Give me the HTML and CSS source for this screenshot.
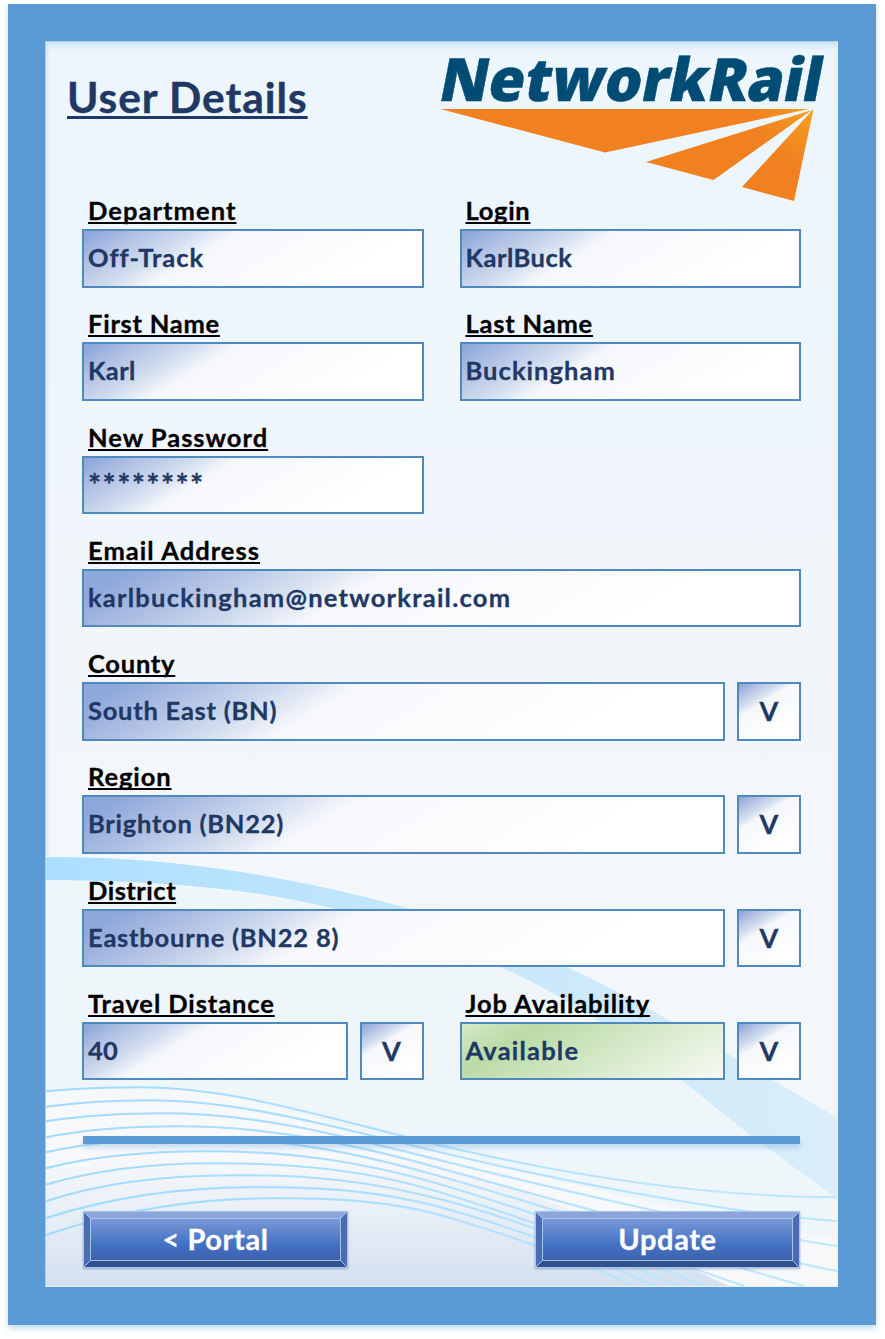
FILE: index.html
```html
<!DOCTYPE html>
<html lang="en">
<head>
<meta charset="utf-8">
<title>User Details</title>
<link rel="stylesheet" href="styles.css">
</head>
<body>
<main class="frame">
  <div class="panel">
    <svg class="waves" viewBox="45 41 793 1246" preserveAspectRatio="none" aria-hidden="true">
      <defs>
        <linearGradient id="band" x1="0" x2="1"><stop offset="0" stop-color="#abdfff"/><stop offset=".5" stop-color="#c6e7fb"/><stop offset="1" stop-color="#daeefa"/></linearGradient>
        <linearGradient id="haze" x1="0" y1="0" x2="0" y2="1"><stop offset="0" stop-color="#f5f8fa"/><stop offset=".33" stop-color="#f8f9fb"/><stop offset=".6" stop-color="#eaf0f7"/><stop offset="1" stop-color="#d4e0f0"/></linearGradient>
        <linearGradient id="wire" gradientUnits="userSpaceOnUse" x1="45" x2="838"><stop offset="0" stop-color="#a0daff"/><stop offset="1" stop-color="#c0e8fc"/></linearGradient>
      </defs>
      <path fill="#eef6fa" d="M45 881C160 881 250 890 327 908C400 927 450 945 498 967C570 1000 630 1042 680 1080L838 1200V1287H45Z"/>
      <path fill="#f7f8f9" d="M45 1092C90 1087 190 1080 250 1102C400 1140 560 1190 838 1240V1287H45Z"/>
      <path fill="url(#haze)" d="M45 1092C90 1087 190 1080 250 1110C370 1148 480 1170 590 1220Q670 1260 730 1287H45Z"/>
      <path fill="url(#band)" stroke="#f8fafb" stroke-width="1" d="M40 857C160 855 290 875 407 908C470 927 510 942 567 967C660 1010 750 1068 843 1120V1204L750 1136L680 1080C620 1034 560 994 498 967C450 945 400 927 327 908C250 890 160 881 40 881Z"/>
      <g fill="none" stroke="url(#wire)" stroke-width="2.1">
        <path d="M45 1092C77 1089 105 1088 140 1088C235 1088 330 1120 440 1146S690 1198 838 1198"/>
        <path d="M45 1107.500C80 1103 115 1101 150 1101C240 1101 340 1129 440 1153S710 1212 838 1222"/>
        <path d="M45 1122C85 1116 125 1114 165 1114C255 1114 340 1136 440 1161S740 1233 838 1247"/>
        <path d="M45 1138C85 1130 130 1127 178 1127C268 1127 350 1144 440 1169S750 1256 838 1272"/>
        <path d="M45 1153C90 1143 140 1139 190 1139C285 1139 350 1152 440 1177S690 1255 805 1287"/>
        <path d="M45 1169C95 1156 150 1152 205 1152C290 1152 360 1162 440 1185S660 1258 745 1287"/>
        <path d="M45 1185.500C100 1169 155 1164 215 1164C300 1164 370 1172 440 1193S630 1257 705 1287"/>
        <path d="M45 1202C105 1182 170 1176 235 1176C315 1176 370 1182 440 1200S600 1252 677 1287"/>
        <path d="M45 1219C110 1198 180 1188 255 1188C325 1188 380 1192 440 1208S595 1258 655 1287"/>
        <path d="M45 1236C115 1211 200 1199 275 1199C335 1199 390 1202 440 1216S580 1260 634 1287"/>
      </g>
    </svg>

    <header class="header">
      <h1 class="title">User Details</h1>
      <svg class="logo" viewBox="436 21 394 184" role="img" aria-label="NetworkRail">
        <defs><radialGradient id="flare" gradientUnits="userSpaceOnUse" cx="813" cy="109" r="60"><stop offset="0" stop-color="#f6a01f"/><stop offset="1" stop-color="#f08020"/></radialGradient></defs>
        <text class="logo-text" transform="translate(437 101) skewX(-11)" textLength="382" lengthAdjust="spacingAndGlyphs">NetworkRail</text>
        <path fill="url(#flare)" d="M440.500 109H809L605 152.500ZM812 110L646 162L713.500 180ZM813.500 109L742 187L794 201Z"/>
      </svg>
    </header>

    <form class="form">
      <div class="row halves">
        <label class="field"><span class="label l-dept">Department</span><span class="box v-dept">Off-Track</span></label>
        <label class="field"><span class="label l-login">Login</span><span class="box v-login">KarlBuck</span></label>
      </div>
      <div class="row halves">
        <label class="field"><span class="label l-first">First Name</span><span class="box v-first">Karl</span></label>
        <label class="field"><span class="label l-last">Last Name</span><span class="box v-last">Buckingham</span></label>
      </div>
      <div class="row halves">
        <label class="field"><span class="label l-pass">New Password</span><span class="box v-pass">********</span></label>
      </div>
      <div class="row">
        <label class="field"><span class="label l-mail">Email Address</span><span class="box long v-mail">karlbuckingham@networkrail.com</span></label>
      </div>
      <div class="row">
        <div class="field"><span class="label l-county">County</span><div class="select"><span class="box long v-county">South East (BN)</span><span class="box drop">V</span></div></div>
      </div>
      <div class="row">
        <div class="field"><span class="label l-region">Region</span><div class="select"><span class="box long v-region">Brighton (BN22)</span><span class="box drop">V</span></div></div>
      </div>
      <div class="row">
        <div class="field"><span class="label l-district">District</span><div class="select"><span class="box long v-district">Eastbourne (BN22 8)</span><span class="box drop">V</span></div></div>
      </div>
      <div class="row halves">
        <div class="field"><span class="label l-travel">Travel Distance</span><div class="select"><span class="box v-travel">40</span><span class="box drop">V</span></div></div>
        <div class="field"><span class="label l-job">Job Availability</span><div class="select"><span class="box available v-job">Available</span><span class="box drop">V</span></div></div>
      </div>
      <div class="divider"></div>
      <div class="actions">
        <button type="button" class="button"><svg class="bevel" viewBox="0 0 265 57" aria-hidden="true"><path d="M.5.500H264.500V56.500H.5ZM7.500 7.500H257.500V49.500H7.500ZM.5.500L7.500 7.500M264.500.500L257.500 7.500M.5 56.500L7.500 49.500M264.500 56.500L257.500 49.500"/></svg><span class="caption c-portal">&lt; Portal</span></button>
        <button type="button" class="button"><svg class="bevel" viewBox="0 0 265 57" aria-hidden="true"><path d="M.5.500H264.500V56.500H.5ZM7.500 7.500H257.500V49.500H7.500ZM.5.500L7.500 7.500M264.500.500L257.500 7.500M.5 56.500L7.500 49.500M264.500 56.500L257.500 49.500"/></svg><span class="caption c-update">Update</span></button>
      </div>
    </form>
  </div>
</main>
</body>
</html>
```
FILE: styles.css
```css
* { box-sizing: border-box; }
body { margin: 0; padding: 4px 0 0 8px; height: 1339px; background: #fff; font-family: Lato, "Open Sans", sans-serif; font-weight: 700; }

.frame {
  width: 868px; height: 1321px;
  border: solid #5b9bd5; border-width: 37px 38px 38px 37px;
  box-shadow: 0 3px 6px rgba(91, 155, 213, .4);
}
.panel {
  position: relative; width: 793px; height: 1246px;
  border: 1px solid #a9cdec; border-right-color: #e8f4fb; border-bottom-color: #e4eef7;
  background: linear-gradient(#edf5fd, #eef6fd 20%, #eff6fc 32%, #f1f6fa 42%, #f3f6fa 60%, #f5f7fa);
  box-shadow: inset 0 6px 7px -2px #cfe2f4, inset 4px 0 5px -3px #d9e8f5;
}
.waves { position: absolute; left: 0; top: 0; width: 100%; height: 100%; }
.header, .form { position: relative; }

.header { display: flex; justify-content: space-between; height: 150px; padding: 0 7px 0 21px; }
.title {
  margin: 28px 0 0; height: 54px; line-height: 54px; font-size: 42.500px; font-weight: 700;
  letter-spacing: .95px; -webkit-text-stroke: .4px #1f3864;
  color: #1f3864; text-decoration: underline; text-decoration-thickness: 3px;
  text-underline-offset: 3px; text-decoration-skip-ink: none; white-space: nowrap;
}
.logo { width: 394px; height: 184px; margin-top: -21px; flex: none; overflow: visible; }
.logo-text { font-family: "Open Sans", "Noto Sans", sans-serif; font-weight: 800; font-size: 59.500px; fill: #004c75; stroke: #004c75; stroke-width: .5; }

.form { width: 719px; margin-left: 36px; display: flex; flex-direction: column; }
.row { display: grid; grid-template-columns: 1fr; column-gap: 36px; height: 95px; margin-bottom: 18.250px; }
.halves { grid-template-columns: 1fr 1fr; }
.field { display: block; }
.label {
  display: block; width: max-content; height: 37px; margin-left: 6px; line-height: 36px; font-size: 25.500px; color: #000;
  -webkit-text-stroke: .3px #000;
  text-decoration: underline; text-decoration-thickness: 2px; text-underline-offset: 2px;
  text-decoration-skip-ink: none; white-space: nowrap;
}
.box {
  display: block; height: 58.500px; padding: 0 4px; border: 2px solid #5089be; line-height: 53px;
  font-size: 25.500px; color: #1f3864; white-space: nowrap; -webkit-text-stroke: .3px #1f3864;
  background: linear-gradient(149deg, #8da8db 2%, #b4c3e5 14%, #d0dcee 26%, #f5f7fb 36%, #fff 80%);
}
.long { background: linear-gradient(149deg, #8da8db 5%, #b4c3e5 18%, #d0dcee 28%, #f7f8fc 38%, #fff 80%); }
.select { display: grid; grid-template-columns: 1fr 64px; column-gap: 12px; }
.drop { padding: 0; text-align: center; font-size: 27px; }
.available { background: linear-gradient(149deg, #d5e8c9, #bbdba6 22%, #f6faf3); }

.l-dept { letter-spacing: 1.050px; }
.l-login { letter-spacing: .7px; }
.l-first { letter-spacing: .75px; }
.l-last { letter-spacing: .8px; }
.l-pass { letter-spacing: 1px; }
.l-mail { letter-spacing: 1.050px; }
.l-county { letter-spacing: .75px; }
.l-region { letter-spacing: .9px; }
.l-district { letter-spacing: .5px; }
.l-travel { letter-spacing: .9px; }
.l-job { letter-spacing: .9px; }
.v-dept { letter-spacing: .95px; }
.v-login { letter-spacing: .5px; }
.v-first { letter-spacing: .4px; }
.v-last { letter-spacing: 1.050px; }
.v-mail { letter-spacing: 1.230px; }
.v-county { letter-spacing: .75px; }
.v-region { letter-spacing: .75px; }
.v-district { letter-spacing: .78px; }
.v-travel { letter-spacing: .3px; }
.v-job { letter-spacing: 1.200px; }
.v-pass { font-size: 31px; letter-spacing: 1.400px; }

.divider { height: 8px; margin: 38px 1px 67px; background: #5b9bd5; box-shadow: 0 4px 5px rgba(91, 155, 213, .3); }
.actions { display: flex; justify-content: space-between; padding: 0 1px; }
.button {
  position: relative; width: 265px; height: 57px; padding: 0; border: 7px solid;
  border-color: #8ba5da #4b6cb2 #30508f #4b6cb2;
  background: linear-gradient(#7c9ad6, #4472c4 60%, #3d61ab) padding-box;
  color: #fff; font: 700 29px/43px Lato, sans-serif; box-shadow: 0 1px 2px rgba(60, 90, 150, .4);
}
.bevel { position: absolute; left: -7px; top: -7px; width: 265px; height: 57px; fill: none; stroke: #a9c4e8; stroke-width: 1; }
.caption { position: relative; display: block; line-height: 41px; height: 43px; letter-spacing: .6px; -webkit-text-stroke: .3px #fff; }
```
